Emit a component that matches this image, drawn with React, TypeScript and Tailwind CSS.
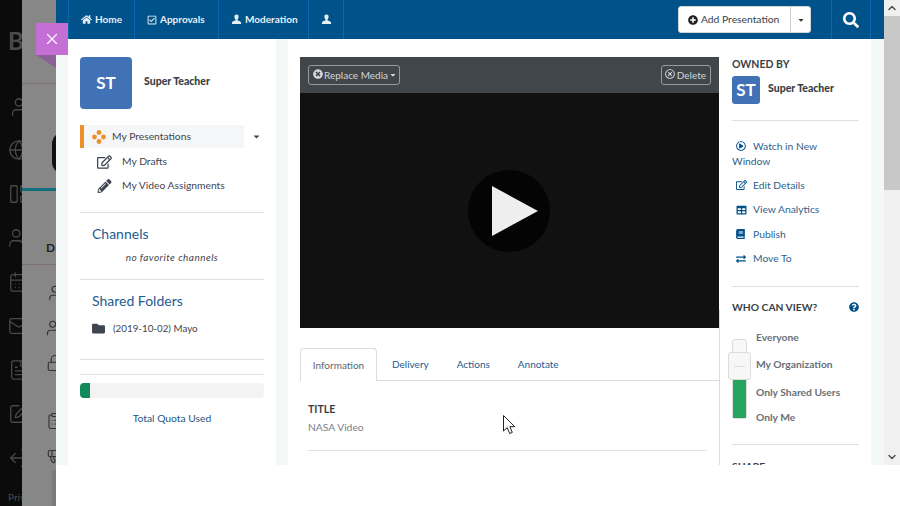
import { X, User, Globe, Users, CalendarDays, Mail, FileText, SquarePen, LogOut, Lock, ClipboardList, Megaphone, LayoutPanelLeft, ChevronUp, ChevronDown } from "lucide-react";
import {
  FaHome,
  FaRegCheckSquare,
  FaPlusCircle,
  FaCaretDown,
  FaSearch,
  FaTimesCircle,
  FaRegTimesCircle,
  FaRegEdit,
  FaPencilAlt,
  FaFolder,
  FaRegPlayCircle,
  FaBook,
  FaExchangeAlt,
  FaTable,
  FaQuestionCircle,
} from "react-icons/fa";

function UserGlyph({ className }: { className?: string }) {
  return (
    <svg viewBox="0 0 12 12" className={className} fill="currentColor">
      <path d="M6 .5c1.5 0 2.3 1 2.3 2.4 0 1.3-.6 2.3-1.2 2.9v1c0 .5 3.9 1 3.9 2.6V11H1V9.4c0-1.600 3.900-2.100 3.900-2.600v-1C4.300 5.200 3.700 4.200 3.700 2.900 3.700 1.500 4.500.5 6 .5z" />
    </svg>
  );
}

function NavItem({ icon, label, className }: { icon: React.ReactNode; label?: string; className: string }) {
  return (
    <div className={`flex h-full items-center gap-[3px] border-r border-[#0a68ae] pl-3 text-[10px] font-bold text-[#e8eff5] ${className}`}>
      {icon}
      {label && <span>{label}</span>}
    </div>
  );
}

function Backdrop() {
  return (
    <div className="flex h-full w-[56px] shrink-0">
      <div className="flex h-full w-[22px] flex-col items-start overflow-hidden bg-[#0b0b0b] pl-2 text-[#4a4a4a]">
        <span className="mt-[28px] h-[26px] text-[24px] font-bold leading-[26px]">B</span>
        <User className="mt-[42px] h-[22px] w-[22px] shrink-0" strokeWidth={1.4} />
        <Globe className="mt-[21px] h-[22px] w-[22px] shrink-0" strokeWidth={1.4} />
        <LayoutPanelLeft className="mt-[22px] h-[22px] w-[22px] shrink-0" strokeWidth={1.4} />
        <Users className="mt-[22px] h-[22px] w-[22px] shrink-0" strokeWidth={1.4} />
        <CalendarDays className="mt-[22px] h-[22px] w-[22px] shrink-0" strokeWidth={1.4} />
        <Mail className="mt-[22px] h-[22px] w-[22px] shrink-0" strokeWidth={1.4} />
        <FileText className="mt-[22px] h-[22px] w-[22px] shrink-0" strokeWidth={1.4} />
        <SquarePen className="mt-[22px] h-[22px] w-[22px] shrink-0" strokeWidth={1.4} />
        <LogOut className="mt-[22px] h-[22px] w-[22px] shrink-0 rotate-180" strokeWidth={1.4} />
        <span className="mt-[21px] text-[10px] leading-[14px]">Privacy</span>
      </div>
      <div className="flex h-full w-[34px] flex-col overflow-hidden bg-[#878787] text-[#333]">
        <div className="h-[84px] border-b border-[#7d6f70]" />
        <div className="ml-[30px] mt-[48px] h-[42px] w-[12px] rounded-l-full bg-[#111]" />
        <div className="mt-[14px] h-[3px] w-full bg-[#0f6f7c]" />
        <span className="ml-[24px] mt-[51px] text-[12px] font-bold leading-none text-[#222]">D</span>
        <div className="mt-[10px] h-px w-full bg-[#7d6f70]" />
        <User className="ml-[24px] mt-[19px] h-[18px] w-[18px] shrink-0" strokeWidth={1.5} />
        <Users className="ml-[24px] mt-[17px] h-[18px] w-[18px] shrink-0" strokeWidth={1.5} />
        <Lock className="ml-[24px] mt-[17px] h-[18px] w-[18px] shrink-0" strokeWidth={1.5} />
        <ClipboardList className="ml-[24px] mt-[40px] h-[18px] w-[18px] shrink-0" strokeWidth={1.5} />
        <Megaphone className="ml-[24px] mt-[16px] h-[18px] w-[18px] shrink-0" strokeWidth={1.5} />
        <div className="ml-[30px] mt-auto h-[36px] w-[4px] shrink-0 bg-[#7a7a7a]" />
      </div>
    </div>
  );
}

function LeftMenu() {
  return (
    <div className="flex h-full w-[208px] shrink-0 flex-col bg-white px-3 pt-[18px] text-[#3f4650]">
      <div className="flex items-center">
        <div className="flex h-[52px] w-[52px] items-center justify-center rounded bg-[#4272b6] text-[17px] font-bold text-white">ST</div>
        <span className="mb-[2px] ml-3 text-[10.5px] font-black text-[#3a3f47]">Super Teacher</span>
      </div>
      <div className="mt-4 flex h-[23px] items-center">
        <div className="flex h-full w-[164px] items-center border-l-4 border-[#ef8e2c] bg-[#f4f6f7] pl-2">
          <svg viewBox="0 0 14 14" className="h-[14px] w-[14px] text-[#ef8e2c]" fill="currentColor">
            <circle cx="7" cy="2.500" r="2.400" />
            <circle cx="2.500" cy="7" r="2.400" />
            <circle cx="11.500" cy="7" r="2.400" />
            <circle cx="7" cy="11.500" r="2.400" />
          </svg>
          <span className="ml-[6px] text-[10.3px]">My Presentations</span>
        </div>
        <FaCaretDown className="ml-2 h-[9px] w-[9px] text-[#3f4650]" />
      </div>
      <div className="mt-[2px] flex h-[24px] items-center pl-[17px]">
        <FaRegEdit className="h-[14px] w-[15px] text-[#3f4650]" />
        <span className="ml-[10px] text-[10.3px]">My Drafts</span>
      </div>
      <div className="flex h-[24px] items-center pl-[17px]">
        <FaPencilAlt className="h-[14px] w-[15px] text-[#3f4650]" />
        <span className="ml-[10px] text-[10.3px]">My Video Assignments</span>
      </div>
      <div className="mt-[14px] h-px bg-[#dfe1e3]" />
      <div className="mt-[11px] pl-3 text-[14px] leading-[20px] text-[#1d5c90]">Channels</div>
      <div className="mt-[6px] text-center text-[10px] italic leading-[14px] tracking-[0.45px]">no favorite channels</div>
      <div className="mt-[15px] h-px bg-[#dfe1e3]" />
      <div className="mt-[11px] pl-3 text-[14px] leading-[20px] text-[#1d5c90]">Shared Folders</div>
      <div className="mt-[7px] flex h-[20px] items-center pl-3">
        <FaFolder className="h-[13px] w-[13px] text-[#3f4650]" />
        <span className="ml-2 text-[9.8px]">(2019-10-02) Mayo</span>
      </div>
      <div className="mt-[21px] h-px bg-[#dfe1e3]" />
      <div className="mt-[14px] h-px bg-[#dfe3e6]" />
      <div className="mt-[8px] h-[15px] overflow-hidden rounded bg-[#f3f3f3]">
        <div className="h-[15px] w-[10px] bg-[#118a5c]" />
      </div>
      <div className="mt-[13px] text-center text-[10.3px] leading-[14px] text-[#24557f]">Total Quota Used</div>
    </div>
  );
}

function VideoColumn() {
  return (
    <div className="flex h-full w-[419px] shrink-0 flex-col">
      <div className="flex h-[36px] items-center justify-between bg-[#41464b] px-2 text-[10px] text-[#d4d6d8]">
        <div className="flex h-[20px] items-center gap-[1px] rounded-[3px] border border-[#979b9e] pl-1 pr-[2px]">
          <FaTimesCircle className="mb-[2px] h-[10px] w-[10px]" />
          <span className="mt-px">Replace Media</span>
          <FaCaretDown className="h-[8px] w-[8px]" />
        </div>
        <div className="flex h-[20px] items-center gap-[2px] rounded-[3px] border border-[#979b9e] pl-[3px] pr-1">
          <FaRegTimesCircle className="mb-[2px] h-[10px] w-[10px]" />
          <span className="mt-px">Delete</span>
        </div>
      </div>
      <div className="flex h-[235px] items-center justify-center bg-[#111111]">
        <div className="mr-[2px] flex h-[82px] w-[82px] items-center justify-center rounded-full bg-[#040404]">
          <svg viewBox="0 0 46 50" className="ml-[13px] h-[50px] w-[46px]" fill="#eeeeee">
            <polygon points="0,0 46,25 0,50" />
          </svg>
        </div>
      </div>
      <div className="mt-[20px] flex h-[33px] border-b border-[#dcdcdc] text-[10px] text-[#1d5c90]">
        <div className="flex h-[33px] w-[77px] items-center justify-center rounded-t border border-b-0 border-[#dcdcdc] bg-white text-[#5d6670]">Information</div>
        <div className="ml-[15px] flex items-center">Delivery</div>
        <div className="ml-[28px] flex items-center">Actions</div>
        <div className="ml-[28px] flex items-center">Annotate</div>
      </div>
      <div className="pl-2 pr-3">
        <div className="mt-[21px] text-[10.5px] font-bold leading-[14px] text-[#3a3f47]">TITLE</div>
        <div className="mt-[4px] text-[10.3px] leading-[14px] text-[#7a8089]">NASA Video</div>
        <div className="mt-[16px] h-px bg-[#dfe1e3]" />
      </div>
    </div>
  );
}

function ActionLink({ icon, label }: { icon: React.ReactNode; label: string }) {
  return (
    <div className="flex h-[24.500px] items-center text-[10.3px] text-[#2f5f8d]">
      <span className="ml-1 flex w-[17px] shrink-0 text-[#00518a]">{icon}</span>
      <span>{label}</span>
    </div>
  );
}

function RightColumn() {
  return (
    <div className="h-full w-[152px] shrink-0 overflow-hidden border-l border-[#dcdcdc] pl-3 pr-3 text-[#3f4650] [border-image:linear-gradient(to_bottom,transparent_271px,#dcdcdc_271px)_1]">
      <div className="mt-[18px] text-[10.5px] font-bold leading-[14px] text-[#3a3f47]">OWNED BY</div>
      <div className="mt-[5px] flex">
        <div className="flex h-[28px] w-[28px] items-center justify-center rounded-[3px] bg-[#4272b6] text-[17px] font-bold text-white">ST</div>
        <span className="ml-2 mt-[5px] text-[10.5px] font-black leading-[14px] text-[#3a3f47]">Super Teacher</span>
      </div>
      <div className="mt-[16px] h-px w-[127px] bg-[#dfe1e3]" />
      <div className="mt-[18px] w-[110px] text-[10.3px] leading-[15px] text-[#2f5f8d]">
        <FaRegPlayCircle className="mb-[2px] ml-1 mr-[7px] inline h-[10px] w-[10px] text-[#00518a]" />
        Watch in New Window
      </div>
      <div className="mt-[4px]">
        <ActionLink icon={<FaRegEdit className="h-[10px] w-[11px]" />} label="Edit Details" />
        <ActionLink icon={<FaTable className="h-[10px] w-[11px]" />} label="View Analytics" />
        <ActionLink icon={<FaBook className="h-[10px] w-[9px]" />} label="Publish" />
        <ActionLink icon={<FaExchangeAlt className="h-[10px] w-[10px]" />} label="Move To" />
      </div>
      <div className="mt-[15px] h-px w-[127px] bg-[#d9dfe4]" />
      <div className="mt-[13px] flex w-[127px] items-center justify-between text-[10.3px] font-bold leading-[14px] text-[#3a3f47]">
        <span>WHO CAN VIEW?</span>
        <FaQuestionCircle className="h-[10px] w-[10px] text-[#00518a]" />
      </div>
      <div className="mt-[16px] flex">
        <div className="relative mt-[9px] h-[80px] w-[15px] rounded-[3px] border border-[#dcdcdc] bg-[#f7f8f8]">
          <div className="mt-[39px] h-[39px] bg-[#27a55f]" />
          <div className="absolute -left-[5px] top-[12px] flex h-[28px] w-[23px] items-center justify-center rounded-[3px] border border-[#dcdcdc] bg-[#f7f7f7]">
            <div className="h-px w-[11px] bg-[#dedede]" />
          </div>
        </div>
        <div className="ml-[9px] text-[10.3px] font-bold text-[#6a7078]">
          <div className="h-[14px] leading-[14px]">Everyone</div>
          <div className="mt-[13px] h-[14px] leading-[14px]">My Organization</div>
          <div className="mt-[14px] h-[14px] leading-[14px]">Only Shared Users</div>
          <div className="mt-[11px] h-[14px] leading-[14px]">Only Me</div>
        </div>
      </div>
      <div className="mt-[20px] h-px w-[127px] bg-[#d9dfe4]" />
      <div className="mt-[14px] text-[10.3px] font-bold leading-[14px] text-[#3a3f47]">SHARE</div>
    </div>
  );
}

export default function App() {
  return (
    <div className="relative flex h-[506px] w-[900px] overflow-hidden bg-white font-['Lato','Open_Sans',sans-serif]">
      <Backdrop />

      {/* Panel */}
      <div className="flex h-[465px] w-[828px] shrink-0 flex-col">
        <div className="flex h-[39px] shrink-0 items-center bg-[#00538a] pr-[13px]">
          <div className="h-full w-[13px] border-r border-[#0a68ae]" />
          <NavItem className="w-[66px]" icon={<FaHome className="h-[11px] w-[11px]" />} label="Home" />
          <NavItem className="w-[84px]" icon={<FaRegCheckSquare className="h-[10px] w-[10px]" />} label="Approvals" />
          <NavItem className="w-[90px]" icon={<UserGlyph className="h-[11px] w-[11px]" />} label="Moderation" />
          <NavItem className="w-[35px]" icon={<UserGlyph className="h-[11px] w-[11px]" />} />
          <div className="ml-auto flex h-[27px] w-[133px] items-center rounded-[3px] border border-[#d5d5d5] bg-white text-[10.3px] text-[#3a3f47]">
            <FaPlusCircle className="ml-[9px] h-[10px] w-[10px] text-[#222]" />
            <span className="ml-[3px]">Add Presentation</span>
            <div className="ml-auto flex h-full w-[20px] items-center justify-center border-l border-[#cfcfcf]">
              <FaCaretDown className="h-[8px] w-[8px] text-[#333]" />
            </div>
          </div>
          <div className="ml-[20px] flex h-full w-[40px] items-center justify-center border-x border-[#0a68ae]">
            <FaSearch className="h-[16px] w-[16px] text-white" />
          </div>
        </div>
        <div className="flex min-h-0 flex-1 bg-[#f4f7f8] pl-3 pr-[13px]">
          <LeftMenu />
          <div className="ml-3 flex h-full w-[583px] shrink-0 bg-white pl-3 pt-[18px]">
            <VideoColumn />
            <div className="-mt-[18px] h-[426px]">
              <RightColumn />
            </div>
          </div>
        </div>
      </div>

      {/* Scrollbar */}
      <div className="flex h-[465px] w-[16px] shrink-0 flex-col bg-[#f0f0f0]">
        <div className="flex h-[16px] items-center justify-center"><ChevronUp className="h-[12px] w-[12px] text-[#505050]" strokeWidth={3} /></div>
        <div className="h-[174px] bg-[#c8c8c8]" />
        <div className="mt-auto flex h-[16px] items-center justify-center"><ChevronDown className="h-[12px] w-[12px] text-[#505050]" strokeWidth={3} /></div>
      </div>

      {/* Close tab */}
      <div className="absolute left-[36px] top-[23px] flex h-[32px] w-[32px] items-center justify-center bg-[#c56fd5]">
        <X className="h-[18px] w-[18px] text-white" strokeWidth={1.5} />
      </div>
      <div className="absolute left-[36px] top-[55px] h-0 w-0 border-l-[20px] border-t-[13px] border-l-transparent border-t-[#8a6096]" />

      {/* Mouse pointer */}
      <svg viewBox="0 0 13 20" className="absolute left-[503px] top-[415px] h-[20px] w-[13px]">
        <path d="M.5.500v15.500l3.700-3.300 2.500 5.800 2.600-1.100-2.500-5.700h5z" fill="#fff" stroke="#222" strokeWidth="1" />
      </svg>
    </div>
  );
}
